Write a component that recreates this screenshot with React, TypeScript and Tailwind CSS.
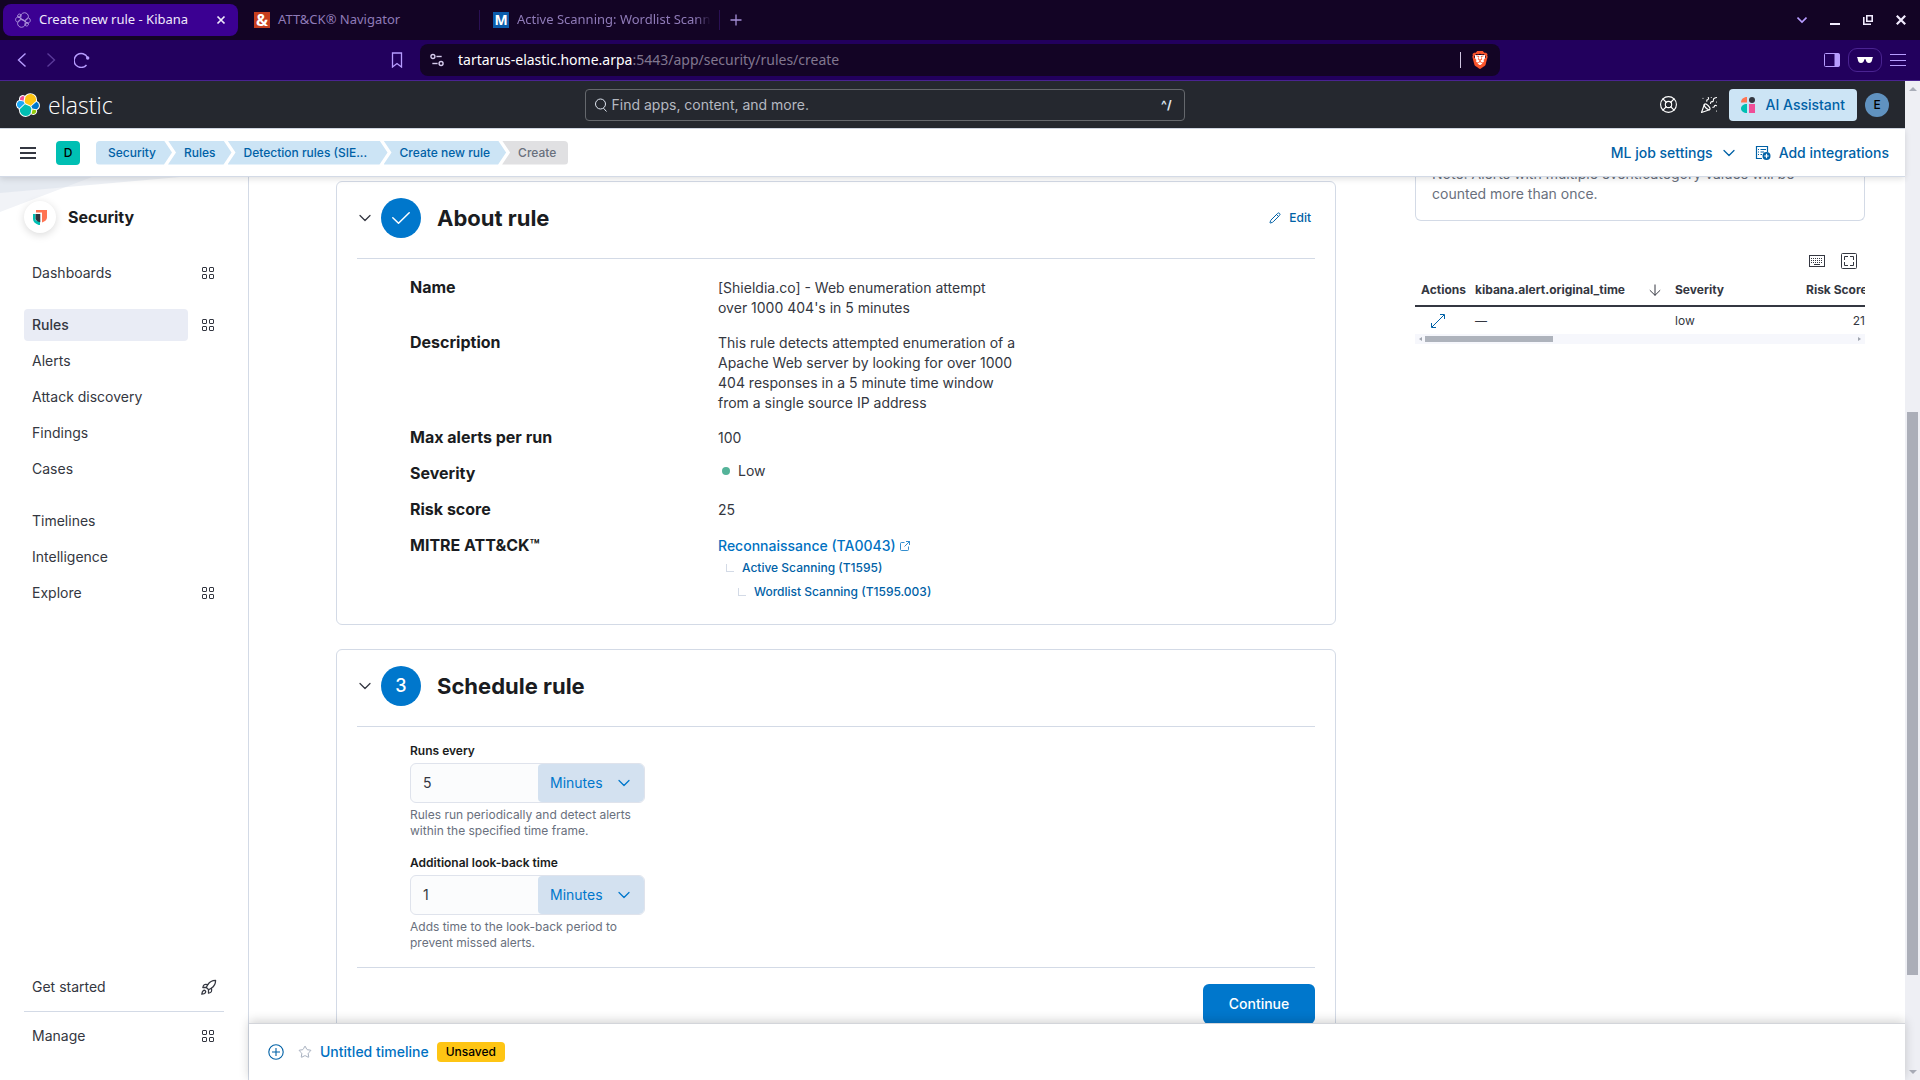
import type { ReactNode } from "react"
import { ChevronDown, LifeBuoy, PartyPopper, Pencil, Rocket, Star } from "lucide-react"
import { SiBrave } from "react-icons/si"

const CLUSTER = [
  { fill: "#fec514", d: "M12.58 13.787l7.002 3.211 7.066-6.213a7.849 7.849 0 0 0 .152-1.557c0-4.287-3.47-7.757-7.738-7.757a7.704 7.704 0 0 0-6.383 3.382l-1.176 6.118 1.077 2.816z" },
  { fill: "#00bfb3", d: "M5.333 21.228A7.964 7.964 0 0 0 5.18 22.8c0 4.304 3.497 7.785 7.782 7.785a7.783 7.783 0 0 0 6.412-3.393l1.167-6.088-1.557-2.979-7.03-3.21-6.63 6.31z" },
  { fill: "#f04e98", d: "M5.288 9.09l4.8 1.137L11.14 4.77a3.785 3.785 0 0 0-5.862 2.995c0 .455.01.91.01 1.325z" },
  { fill: "#1ba9f5", d: "M4.871 10.232c-2.147.71-3.631 2.773-3.631 5.03 0 2.205 1.36 4.167 3.4 4.946l6.744-6.105-1.236-2.644-5.277-1.227z" },
  { fill: "#93c90e", d: "M20.88 27.186a3.773 3.773 0 0 0 2.29.783 3.782 3.782 0 0 0 3.578-5.03l-4.67-1.092-1.198 5.339z" },
  { fill: "#0077cc", d: "M21.853 20.6l5.142 1.205c2.147-.71 3.631-2.773 3.631-5.03a5.3 5.3 0 0 0-3.41-4.946l-6.721 5.9 1.358 2.87z" },
]

function ElasticLogo() {
  return (
    <svg viewBox="0 0 32 32" className="size-6 shrink-0">
      {CLUSTER.map((p) => <path key={p.fill} d={p.d} fill="#fff" stroke="#fff" strokeWidth="2.6" />)}
      {CLUSTER.map((p) => <path key={p.fill} d={p.d} fill={p.fill} />)}
    </svg>
  )
}

function ClusterOutline() {
  return (
    <svg viewBox="0 0 32 32" className="size-4 shrink-0" fill="none" stroke="#c3b0ea" strokeWidth="1.6">
      {CLUSTER.map((p) => <path key={p.fill} d={p.d} />)}
    </svg>
  )
}

function SecurityLogo() {
  return (
    <svg viewBox="0 0 16 16" className="size-4">
      <path fill="#ff7452" d="M4 1h11v7.5c0 2.2-1.8 4-5 5V3.6H4z" />
      <path fill="#00bfb3" d="M1 5h2.6v6.2L8 12.6v3.9c-4.5-1.500-7-3.700-7-6.500z" />
      <path fill="#343741" d="M3.6 5h4.700v8.200c-3-.7-4.700-1.900-4.700-4z" />
    </svg>
  )
}

function AssistantLogo() {
  return (
    <svg viewBox="0 0 14 16" className="h-4 w-3.5">
      <path fill="#ff7452" d="M6 0v5.5H0C0 2.3 2.5 0 6 0z" />
      <circle cx="11" cy="3" r="3" fill="#343741" />
      <path fill="#00bfb3" d="M6 7v9c-3.500 0-6-1.800-6-4.500S2.500 7 6 7z" />
      <path fill="#f04e98" d="M8 7h6v9H8z" />
    </svg>
  )
}

function AppsIcon() {
  return (
    <svg viewBox="0 0 12 12" className="size-3" fill="none" stroke="#343741">
      <rect x=".5" y=".5" width="4" height="4" rx=".5" />
      <rect x="7.5" y=".5" width="4" height="4" rx=".5" />
      <rect x=".5" y="7.5" width="4" height="4" rx=".5" />
      <rect x="7.5" y="7.5" width="4" height="4" rx=".5" />
    </svg>
  )
}

function Chevron({ className }: { className: string }) {
  return <ChevronDown className={className} size={20} strokeWidth={1.5} />
}

function BrowserTabs() {
  return (
    <div className="flex h-10 items-center bg-[#130425] pl-[3px] pr-3.5 text-[13px] text-[#8f7bb8]">
      <div className="flex h-8 w-[235px] items-center gap-2 rounded-lg bg-[#3b0092] pl-3 pr-2.5 text-[#efe9fb]">
        <ClusterOutline />
        <span className="flex-1 whitespace-nowrap">Create new rule - Kibana</span>
        <button aria-label="Close tab" className="p-0.5">
          <svg viewBox="0 0 10 10" className="size-2.5" stroke="#efe9fb" strokeWidth="1.7"><path d="M1.5 1.5l7 7M8.5 1.5l-7 7" /></svg>
        </button>
      </div>
      <div className="flex h-5 w-[242px] items-center gap-2 border-r border-[#2a1054] pl-4">
        <span className="flex size-4 items-center justify-center bg-[#c63f1f] text-base font-bold leading-4 text-white">&amp;</span>
        <span className="whitespace-nowrap">ATT&amp;CK® Navigator</span>
      </div>
      <div className="flex h-5 w-[240px] items-center gap-2 border-r border-[#2a1054] pl-[13px] pr-2">
        <span className="flex size-4 shrink-0 items-center justify-center bg-[#0b5cab] text-sm font-bold leading-4 text-white">M</span>
        <span className="flex-1 overflow-hidden whitespace-nowrap [mask-image:linear-gradient(to_right,#000_92%,transparent)]">Active Scanning: Wordlist Scanning</span>
      </div>
      <button aria-label="New tab" className="ml-2 p-0.5">
        <svg viewBox="0 0 12 12" className="size-3" stroke="#a58fd6" strokeWidth="1.3"><path d="M6 .5v11M.5 6h11" /></svg>
      </button>
      <div className="ml-auto flex items-center gap-[23px]">
        <button aria-label="Search tabs">
          <svg viewBox="0 0 10 10" className="size-2.5" fill="none" stroke="#b79cff" strokeWidth="1.6"><path d="M.5 2.500 5 7l4.500-4.500" /></svg>
        </button>
        <button aria-label="Minimise">
          <svg viewBox="0 0 10 10" className="size-2.5"><path d="M0 8h10v2H0z" fill="#f2ecff" /></svg>
        </button>
        <button aria-label="Restore">
          <svg viewBox="0 0 10 10" className="size-2.5" fill="none" stroke="#f2ecff" strokeWidth="1.6"><path d="M3.8.8h5.400v5.400H3.800z" /><path d="M.8 2v7.200H8" /></svg>
        </button>
        <button aria-label="Close window">
          <svg viewBox="0 0 10 10" className="size-2.5" stroke="#f2ecff" strokeWidth="2.2"><path d="M.8.8l8.400 8.400M9.200.8.8 9.200" /></svg>
        </button>
      </div>
    </div>
  )
}

function BrowserToolbar() {
  return (
    <div className="flex h-[41px] items-center border-b border-[#4a2391] bg-[#22005d] pl-4 pr-3.5">
      <div className="flex w-[369px] items-center gap-[17px]">
        <button aria-label="Back">
          <svg viewBox="0 0 12 16" className="h-4 w-3" fill="none" stroke="#b79cff" strokeWidth="1.4"><path d="M9.500 1.500 2.500 8l7 6.500" /></svg>
        </button>
        <button aria-label="Forward">
          <svg viewBox="0 0 12 16" className="h-4 w-3" fill="none" stroke="#5b3a9a" strokeWidth="1.4"><path d="M2.500 1.500 9.500 8l-7 6.500" /></svg>
        </button>
        <button aria-label="Reload">
          <svg viewBox="0 0 16 16" className="size-4" fill="none" stroke="#b79cff" strokeWidth="1.4"><path d="M13.500 5.500A7 7 0 1 0 12.500 13" /><circle cx="13.7" cy="6" r="1.7" fill="#b79cff" stroke="none" /></svg>
        </button>
      </div>
      <button aria-label="Bookmark" className="px-1.5">
        <svg viewBox="0 0 12 16" className="h-4 w-3" fill="none" stroke="#b79cff" strokeWidth="1.3"><path d="M1.500 1h9v14L6 11.500 1.500 15z" /></svg>
      </button>
      <div className="ml-[11px] flex h-8 w-[1080px] items-center rounded-lg bg-[#130425] pl-2.5 pr-[11px]">
        <svg viewBox="0 0 12 12" className="size-3.5" fill="none" stroke="#d5caec" strokeWidth="1.2">
          <circle cx="2.5" cy="3" r="1.7" /><path d="M5.500 3H10" /><circle cx="9.5" cy="9" r="1.7" /><path d="M2 9h4.500" />
        </svg>
        <span className="ml-3.5 flex-1 whitespace-nowrap text-sm text-[#81778f]"><span className="text-white">tartarus-elastic.home.arpa</span>:5443/app/security/rules/create</span>
        <span className="mr-2.5 h-4 w-px bg-[#cfc6e0]" />
        <span className="relative flex size-[18px] items-center justify-center">
          <span className="absolute inset-1 bg-white" />
          <SiBrave className="relative size-[18px] text-[#fb542b]" />
        </span>
      </div>
      <div className="ml-auto flex items-center gap-2">
        <button aria-label="Side panel">
          <svg viewBox="0 0 16 14" className="h-3.5 w-4" fill="none" stroke="#b79cff"><rect x=".5" y=".5" width="15" height="13" rx="1" /><path d="M11 1h4v12h-4z" fill="#b79cff" /></svg>
        </button>
        <button aria-label="Private window" className="flex h-6 w-[34px] items-center justify-center rounded-[9px] border border-[#4a2391]">
          <svg viewBox="0 0 16 6" className="h-1.5 w-4" fill="#fff"><path d="M0 0h16l-.6 1.400C15 4.600 14 6 12 6S9 4.400 8.600 2.200H7.400C7 4.400 6 6 4 6S1 4.600.6 1.400z" /></svg>
        </button>
        <button aria-label="Menu">
          <svg viewBox="0 0 16 14" className="h-3.5 w-4" stroke="#b79cff"><path d="M0 1.500h16M0 7.500h16M0 12.500h16" /></svg>
        </button>
      </div>
    </div>
  )
}

function GlobalHeader() {
  return (
    <header className="flex h-12 items-center justify-between border-b border-[#d3dae6] bg-[#25282f] px-4">
      <a href="#home" className="flex items-center gap-2 pr-1 font-['Open_Sans',sans-serif] text-[23px] font-light leading-6 text-white">
        <ElasticLogo />
        elastic
      </a>
      <label className="flex h-8 w-[600px] items-center gap-1 rounded border border-[#65686d] px-2">
        <svg viewBox="0 0 14 14" className="size-3.5" fill="none" stroke="#dfe5ef"><circle cx="6.5" cy="6" r="5" /><path d="M9.500 10.200l3 3.300" /></svg>
        <input
          type="text"
          aria-label="Find apps, content, and more."
          placeholder="Find apps, content, and more."
          className="min-w-0 flex-1 bg-transparent text-sm text-white outline-none placeholder:text-[#b5b9c1]"
        />
        <span className="pr-1 text-xs font-bold text-[#dfe5ef]">^/</span>
      </label>
      <div className="flex items-center">
        <button aria-label="Help menu" className="flex size-8 items-center justify-center text-white"><LifeBuoy size={19} strokeWidth={1.4} /></button>
        <button aria-label="News feed" className="ml-2 mr-1 flex size-8 items-center justify-center text-white"><PartyPopper size={18} strokeWidth={1.5} /></button>
        <button className="flex h-8 items-center gap-[11px] rounded bg-[#cce4f5] px-3 text-sm font-medium text-[#0061a6]">
          <AssistantLogo />
          AI Assistant
        </button>
        <span className="ml-2 flex size-6 items-center justify-center rounded-full bg-[#6092c0] text-xs font-medium text-black">E</span>
      </div>
    </header>
  )
}

const MIDDLE = "-ml-1 flex h-6 items-center bg-[#cce4f5] px-4 text-[#0061a6] [clip-path:polygon(0_0,calc(100%-8px)_0,100%_50%,calc(100%-8px)_100%,0_100%,8px_50%)]"

function ContextBar() {
  return (
    <div className="relative z-10 flex h-12 items-center border-b border-[#d3dae6] bg-white pl-5 pr-4 shadow-[0_2px_6px_rgba(0,0,0,0.12)]">
      <button aria-label="Toggle navigation">
        <svg viewBox="0 0 16 12" className="h-3 w-4" fill="#343741"><path d="M0 0h16v2H0zM0 5h16v2H0zM0 10h16v2H0z" /></svg>
      </button>
      <button className="ml-5 flex size-6 items-center justify-center rounded bg-[#00bfb3] text-xs font-medium text-black">D</button>
      <nav aria-label="Breadcrumbs" className="ml-4 flex text-xs font-medium">
        <a href="#security" className="flex h-6 items-center rounded-l bg-[#cce4f5] pl-3 pr-4 text-[#0061a6] [clip-path:polygon(0_0,calc(100%-8px)_0,100%_50%,calc(100%-8px)_100%,0_100%)]">Security</a>
        <a href="#rules" className={MIDDLE}>Rules</a>
        <a href="#detection" className={`${MIDDLE} w-40 whitespace-nowrap`}>Detection rules (SIE...</a>
        <a href="#new" className={MIDDLE}>Create new rule</a>
        <span className="-ml-1 flex h-6 items-center rounded-r bg-[#e0e0e2] pl-4 pr-3 text-[#69707d] [clip-path:polygon(0_0,100%_0,100%_100%,0_100%,8px_50%)]">Create</span>
      </nav>
      <div className="ml-auto flex items-center text-sm font-medium text-[#0061a6]">
        <button className="flex items-center gap-1.5">
          ML job settings
          <Chevron className="size-5" />
        </button>
        <a href="#integrations" className="ml-4 flex items-center gap-2">
          <svg viewBox="0 0 16 16" className="size-4" fill="none" stroke="#0061a6">
            <path d="M7 13.500H1.500v-12h11V7" strokeWidth="1.2" />
            <path d="M3 4.500h1M5.500 4.500H11M3 7h1M5.500 7H9M3 9.500h1M5.500 9.500H7" />
            <circle cx="11.5" cy="11" r="4" fill="#0061a6" stroke="none" />
            <path d="M11.500 8.800v4.400M9.300 11h4.400" stroke="#fff" strokeWidth="1.2" />
          </svg>
          Add integrations
        </a>
      </div>
    </div>
  )
}

const NAV = [
  [{ name: "Dashboards", panel: true }],
  [
    { name: "Rules", panel: true, active: true },
    { name: "Alerts" },
    { name: "Attack discovery" },
    { name: "Findings" },
    { name: "Cases" },
  ],
  [{ name: "Timelines" }, { name: "Intelligence" }, { name: "Explore", panel: true }],
] as { name: string; panel?: boolean; active?: boolean }[][]

function NavItem({ name, active, icon }: { name: string; active?: boolean; icon?: ReactNode }) {
  return (
    <li className="flex h-8 items-center">
      <a
        href={`#${name}`}
        className={active ? "flex h-8 w-[164px] shrink-0 items-center rounded bg-[#e9ecf5] pl-2 font-medium" : "flex h-8 w-[164px] shrink-0 items-center pl-2"}
      >
        {name}
      </a>
      {icon && <button aria-label={`${name} panel`} className="flex w-10 shrink-0 items-center justify-center">{icon}</button>}
    </li>
  )
}

function Sidebar() {
  return (
    <aside className="relative flex w-[249px] shrink-0 flex-col border-r border-[#d3dae6] px-6 pb-7 text-sm text-[#343741]">
      <svg viewBox="0 0 200 40" className="absolute left-0 top-0 h-10 w-[200px]">
        <path d="M0 0h92L0 35z" fill="#f1f3f7" />
        <path d="M0 0h180L0 16z" fill="#d3dae6" opacity=".4" />
      </svg>
      <div className="relative mt-6 flex items-center gap-3">
        <span className="flex size-8 items-center justify-center rounded-full bg-white shadow-[0_2px_8px_rgba(0,0,0,0.15)]"><SecurityLogo /></span>
        <h2 className="text-base font-bold text-[#1a1c21]">Security</h2>
      </div>
      <nav aria-label="Security" className="mt-6 flex flex-col gap-5">
        {NAV.map((group) => (
          <ul key={group[0].name} className="flex flex-col gap-1">
            {group.map((item) => (
              <NavItem key={item.name} name={item.name} active={item.active} icon={item.panel && <AppsIcon />} />
            ))}
          </ul>
        ))}
      </nav>
      <ul className="mt-auto">
        <NavItem name="Get started" icon={<Rocket size={17} strokeWidth={1.8} />} />
        <li className="my-2 h-px bg-[#d3dae6]" />
        <NavItem name="Manage" icon={<AppsIcon />} />
      </ul>
    </aside>
  )
}

function StepCard({ title, badge, action, children }: { title: string; badge: ReactNode; action?: ReactNode; children: ReactNode }) {
  return (
    <section className="rounded-md border border-[#d3dae6] px-5 pt-4">
      <div className="flex items-center border-b border-[#d3dae6] pb-5">
        <button aria-label={`Toggle ${title}`} className="flex w-4 justify-center text-[#343741]"><Chevron className="size-5 shrink-0" /></button>
        <span className="ml-2 flex size-10 items-center justify-center rounded-full bg-[#0077cc] text-lg font-medium text-white">{badge}</span>
        <h3 className="ml-4 text-[22px] font-bold leading-8 text-[#1a1c21]">{title}</h3>
        {action}
      </div>
      {children}
    </section>
  )
}

function Row({ label, children }: { label: string; children: ReactNode }) {
  return (
    <div className="grid grid-cols-2">
      <dt className="text-base font-bold leading-6 text-[#1a1c21]">{label}</dt>
      <dd className="text-sm leading-5 text-[#343741]">{children}</dd>
    </div>
  )
}

function Elbow() {
  return <span className="size-2 border-b border-l border-[#d3dae6]" />
}

function AboutRule() {
  return (
    <StepCard
      title="About rule"
      badge={<svg viewBox="0 0 18 12" className="h-3 w-[18px]" fill="none" stroke="#fff" strokeWidth="1.5" strokeLinecap="round" strokeLinejoin="round"><path d="M.8 5.800 6.500 11.200 17.200.8" /></svg>}
      action={
        <button className="ml-auto mr-1 flex items-center gap-2 text-xs font-medium text-[#0061a6]">
          <Pencil size={12} />
          Edit
        </button>
      }
    >
      <dl className="ml-[53px] flex max-w-[616px] flex-col gap-3 pb-5 pt-4">
        <Row label="Name"><p className="pr-4 pt-[3px]">[Shieldia.co] - Web enumeration attempt over 1000 404's in 5 minutes</p></Row>
        <Row label="Description"><p className="pt-[3px]">This rule detects attempted enumeration of a Apache Web server by looking for over 1000 404 responses in a 5 minute time window from a single source IP address</p></Row>
        <Row label="Max alerts per run"><p className="pt-[3px]">100</p></Row>
        <Row label="Severity">
          <span className="flex items-center gap-2 pl-1"><span className="size-2 rounded-full bg-[#54b399]" />Low</span>
        </Row>
        <Row label="Risk score"><p className="pt-[3px]">25</p></Row>
        <Row label="MITRE ATT&CK™">
          <a href="#TA0043" className="flex items-center gap-1 pt-[3px] font-medium text-[#0071c2]">
            Reconnaissance (TA0043)
            <svg viewBox="0 0 10 10" className="size-2.5" fill="none" stroke="#0071c2" strokeWidth=".8"><path d="M4.500 1.500h-3a1 1 0 0 0-1 1v6a1 1 0 0 0 1 1h6a1 1 0 0 0 1-1v-3" /><path d="M6 .5h3.500V4M9.500.5l-5 5" /></svg>
          </a>
          <a href="#T1595" className="flex h-6 items-center gap-2 pl-2 text-xs font-medium text-[#0061a6]"><Elbow />Active Scanning (T1595)</a>
          <a href="#T1595.003" className="flex h-6 items-center gap-2 pl-5 text-xs font-medium text-[#0061a6]"><Elbow />Wordlist Scanning (T1595.003)</a>
        </Row>
      </dl>
    </StepCard>
  )
}

function IntervalField({ id, label, value, help }: { id: string; label: string; value: string; help: string }) {
  return (
    <div className="w-[235px]">
      <label htmlFor={id} className="block text-xs font-semibold leading-4 text-[#1a1c21]">{label}</label>
      <div className="mt-1 flex h-10 overflow-hidden rounded-md border border-[#dfe3ec] bg-[#fbfcfd]">
        <input id={id} type="text" inputMode="numeric" defaultValue={value} className="min-w-0 flex-1 bg-transparent px-3 text-sm text-[#343741] outline-none" />
        <div className="relative flex w-[106px] items-center rounded-l bg-[#d3e1f0] text-[#0077cc]">
          <select aria-label={`${label} unit`} className="size-full appearance-none bg-transparent pl-3 pr-8 text-sm outline-none">
            <option>Minutes</option>
            <option>Seconds</option>
            <option>Hours</option>
          </select>
          <Chevron className="pointer-events-none absolute right-2.5 size-5" />
        </div>
      </div>
      <p className="mt-1 text-xs leading-4 text-[#69707d]">{help}</p>
    </div>
  )
}

function ScheduleRule() {
  return (
    <StepCard title="Schedule rule" badge="3">
      <form className="ml-[53px] flex flex-col gap-4 py-4">
        <IntervalField id="interval" label="Runs every" value="5" help="Rules run periodically and detect alerts within the specified time frame." />
        <IntervalField id="lookback" label="Additional look-back time" value="1" help="Adds time to the look-back period to prevent missed alerts." />
      </form>
      <div className="flex justify-end border-t border-[#d3dae6] py-4">
        <button className="h-10 w-28 rounded-md bg-[#0077cc] text-sm font-medium text-white">Continue</button>
      </div>
    </StepCard>
  )
}

function PreviewTable() {
  return (
    <div className="mt-8 overflow-hidden">
      <div className="flex items-center justify-end gap-4 pr-2 text-[#343741]">
        <button aria-label="Keyboard shortcuts">
          <svg viewBox="0 0 16 12" className="h-3 w-4" fill="none" stroke="currentColor">
            <rect x=".5" y=".5" width="15" height="11" />
            <path d="M2 3.500h12M2 5.500h12M2 7.500h12" strokeDasharray="1 1" />
            <path d="M5 9.500h6" />
          </svg>
        </button>
        <button aria-label="Full screen">
          <svg viewBox="0 0 16 16" className="size-4" fill="none" stroke="currentColor">
            <rect x=".5" y=".5" width="15" height="15" rx="1" />
            <path d="M3.500 7V3.500H7M9 3.500h3.500V7M12.500 9v3.500H9M7 12.500H3.500V9" />
          </svg>
        </button>
      </div>
      <table className="mt-1.5 w-[458px] table-fixed text-left text-xs text-[#343741]">
        <colgroup>
          <col className="w-[54px]" />
          <col className="w-[200px]" />
          <col className="w-[131px]" />
          <col className="w-[73px]" />
        </colgroup>
        <thead>
          <tr className="h-[31px] border-b-2 border-[#343741] whitespace-nowrap">
            <th className="pl-1.5 font-bold">Actions</th>
            <th className="px-1.5 font-bold">
              <span className="flex items-center justify-between pr-0.5">
                kibana.alert.original_time
                <svg viewBox="0 0 12 12" className="size-3" fill="none" stroke="currentColor"><path d="M6 .5v11M.8 6.200 6 11.300l5.200-5.100" /></svg>
              </span>
            </th>
            <th className="px-1.5 font-bold">Severity</th>
            <th className="pl-1.5 font-bold">Risk Score</th>
          </tr>
        </thead>
        <tbody>
          <tr className="h-7">
            <td className="pl-4">
              <button aria-label="View details" className="block">
                <svg viewBox="0 0 14 14" className="size-3.5" fill="none" stroke="#0061a6"><path d="M9 .5h4.500V5M13 1 1 13M.5 9v4.500H5" /></svg>
              </button>
            </td>
            <td className="px-1.5">—</td>
            <td className="px-1.5">low</td>
            <td className="px-2 text-right">21</td>
          </tr>
        </tbody>
      </table>
      <div className="flex h-2.5 items-center justify-between bg-[#f6f7fc] px-1 text-[#a0a5af]">
        <svg viewBox="0 0 3 4" className="h-1 w-[3px]" fill="currentColor"><path d="M3 0v4L0 2z" /></svg>
        <span className="ml-[3px] h-1.5 w-32 bg-[#aeb3bc]" />
        <svg viewBox="0 0 3 4" className="ml-auto h-1 w-[3px]" fill="currentColor"><path d="M0 0v4l3-2z" /></svg>
      </div>
    </div>
  )
}

function TimelineBar() {
  return (
    <div className="relative z-10 flex h-[57px] shrink-0 items-center border-t border-[#d3d5da] bg-white pl-[19px] shadow-[0_-2px_10px_rgba(0,0,0,0.18)]">
      <button aria-label="New timeline" className="text-[#0061a6]">
        <svg viewBox="0 0 16 16" className="size-4" fill="none" stroke="currentColor" strokeWidth="1.1"><circle cx="8" cy="8" r="7.200" /><path d="M8 4v8M4 8h8" /></svg>
      </button>
      <button aria-label="Add to favorites" className="ml-3.5 text-[#98a2b3]"><Star size={14} strokeWidth={1.5} /></button>
      <a href="#timeline" className="ml-2 text-sm font-medium text-[#0071c2]">Untitled timeline</a>
      <span className="ml-2 flex h-5 items-center rounded-sm bg-[#fec514] px-[9px] text-xs font-medium text-black">Unsaved</span>
    </div>
  )
}

export default function App() {
  return (
    <div className="flex h-screen flex-col overflow-hidden bg-white font-[Inter,sans-serif]">
      <div className="font-['Noto_Sans',sans-serif]">
        <BrowserTabs />
        <BrowserToolbar />
      </div>
      <div className="flex min-h-0 flex-1">
        <div className="flex min-w-0 flex-1 flex-col">
          <GlobalHeader />
          <ContextBar />
          <div className="flex min-h-0 flex-1">
            <Sidebar />
            <div className="flex min-w-0 flex-1 flex-col">
              <div className="flex min-h-0 flex-1 overflow-hidden">
                <main className="min-w-0 flex-1 pl-6 pt-1">
                  <div className="mx-auto flex max-w-[1000px] flex-col gap-6">
                    <AboutRule />
                    <ScheduleRule />
                  </div>
                </main>
                <aside className="w-[506px] shrink-0 pl-4 pr-10">
                  <div className="-mt-[13px] rounded-b-md border-x border-b border-[#d3dae6] px-4 pb-4 text-sm leading-5 text-[#69707d]">
                    Note: Alerts with multiple event.category values will be counted more than once.
                  </div>
                  <PreviewTable />
                </aside>
              </div>
              <TimelineBar />
            </div>
          </div>
        </div>
        <div className="flex w-[15px] flex-col items-center bg-[#eeeff4] py-1.5">
          <svg viewBox="0 0 8 4" className="h-1 w-2" fill="#a9adb8"><path d="M0 4l4-4 4 4z" /></svg>
          <div className="flex w-[11px] flex-1 flex-col">
            <div className="grow-[321]" />
            <div className="grow-[563] bg-[#abaeb8]" />
            <div className="grow-[95]" />
          </div>
          <svg viewBox="0 0 8 4" className="h-1 w-2" fill="#a9adb8"><path d="M0 0l4 4 4-4z" /></svg>
        </div>
      </div>
    </div>
  )
}
